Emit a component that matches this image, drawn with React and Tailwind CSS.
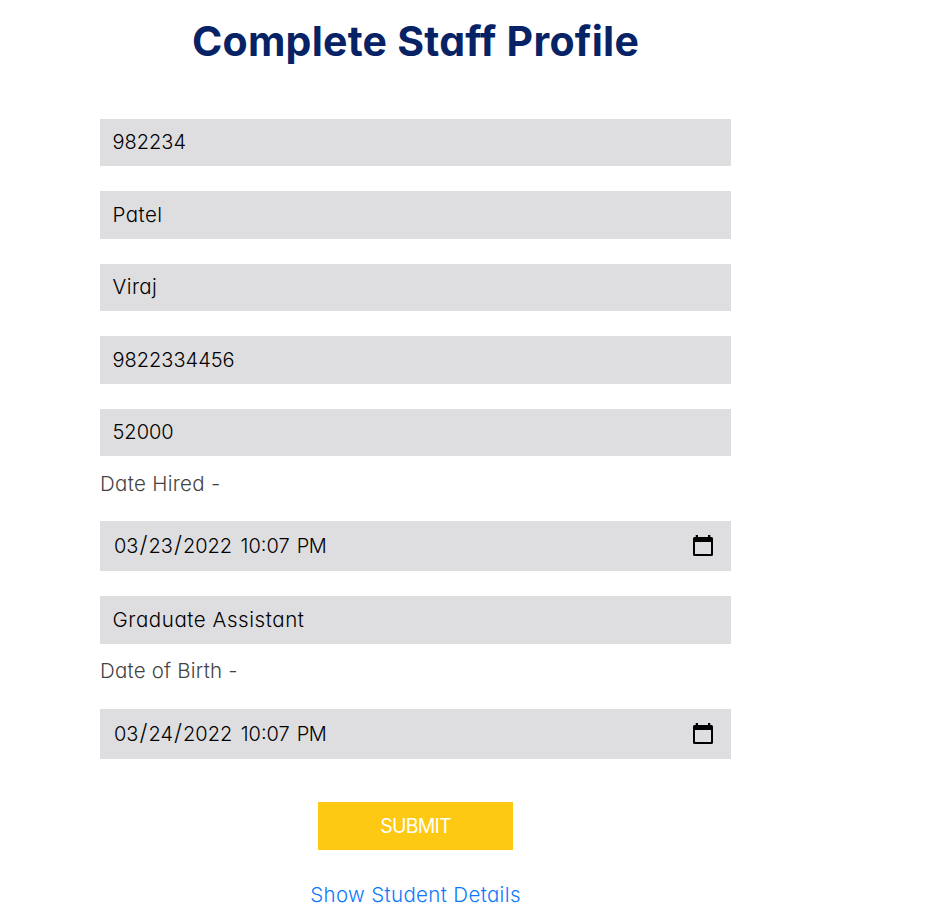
function Field({ children, className = "" }) {
  return (
    <div className={`flex w-full items-center bg-[#dedee0] text-black ${className}`}>
      {children}
    </div>
  );
}

function CalendarIcon() {
  return (
    <svg width="20" height="22" viewBox="0 0 20 22" shapeRendering="geometricPrecision" aria-hidden="true">
      <path
        fill="#000"
        fillRule="evenodd"
        d="M2.700 0h2.300v2h10V0h2.300v2h1.200a1.500 1.500 0 0 1 1.500 1.500v16a1.500 1.500 0 0 1-1.500 1.500h-17A1.500 1.500 0 0 1 0 19.500v-16A1.500 1.500 0 0 1 1.500 2h1.200zM2 7v12h16V7z"
      />
    </svg>
  );
}

function Slash() {
  return <span className="mx-[1px] text-[23px] leading-none">/</span>;
}

function DateField({ month, day, year, time, period }) {
  return (
    <Field className="h-[50px] justify-between pl-[14px] pr-[18px]">
      <span className="flex items-center">
        <span>{month}</span>
        <Slash />
        <span>{day}</span>
        <Slash />
        <span>{year}</span>
        <span className="ml-[8.5px]">{time}</span>
        <span className="ml-[7px] tracking-[-0.5px]">{period}</span>
      </span>
      <CalendarIcon />
    </Field>
  );
}

export default function App() {
  return (
    <div className="h-[919px] w-full overflow-hidden bg-white pl-[100px] font-['Inter','Open_Sans',sans-serif] text-[20px] leading-[30px] font-light [font-feature-settings:'cv11'] whitespace-nowrap">
      <main className="flex w-[631px] flex-col items-center">
        <h1 className="mt-[11px] text-[41px] leading-[60px] font-bold tracking-[0.25px] text-[#072366]">Complete Staff Profile</h1>
        <form className="mt-[47.9px] flex w-full flex-col items-center">
          <div className="flex w-full flex-col gap-[25px]">
            <Field className="h-[47.5px] pb-[1px] pl-[12.5px]"><span>982234</span></Field>
            <Field className="h-[47.5px] pl-[12.5px]"><span className="text-[20.5px] tracking-[0.45px]">Patel</span></Field>
            <Field className="h-[47.5px] pb-[1px] pl-[12.5px]"><span className="text-[20.5px] tracking-[0.4px]">Viraj</span></Field>
            <Field className="h-[47.5px] pl-[12.5px]"><span>9822334456</span></Field>
            <Field className="h-[47.5px] pb-[1px] pl-[12.5px]"><span>52000</span></Field>
          </div>
          <label className="mt-[12.6px] w-full text-[20.5px] tracking-[0.3px] text-[#444]">Date Hired -</label>
          <div className="mt-[22px] flex w-full flex-col gap-[25px]">
            <DateField month="03" day="23" year="2022" time="10:07" period="PM" />
            <Field className="h-[48px] pl-[12.5px]"><span className="text-[20.5px] tracking-[0.57px]">Graduate Assistant</span></Field>
          </div>
          <label className="mt-[12px] w-full text-[20.5px] tracking-[0.2px] text-[#444]">Date of Birth -</label>
          <div className="mt-[23px] w-full">
            <DateField month="03" day="24" year="2022" time="10:07" period="PM" />
          </div>
          <button type="button" className="mt-[43px] h-[48px] w-[195px] bg-[#fdc913] text-[19.5px] font-normal tracking-[-0.8px] text-white">SUBMIT</button>
        </form>
        <a className="mt-[30px] text-[20.5px] tracking-[0.35px] text-[#0d78fc]">Show Student Details</a>
      </main>
    </div>
  );
}
